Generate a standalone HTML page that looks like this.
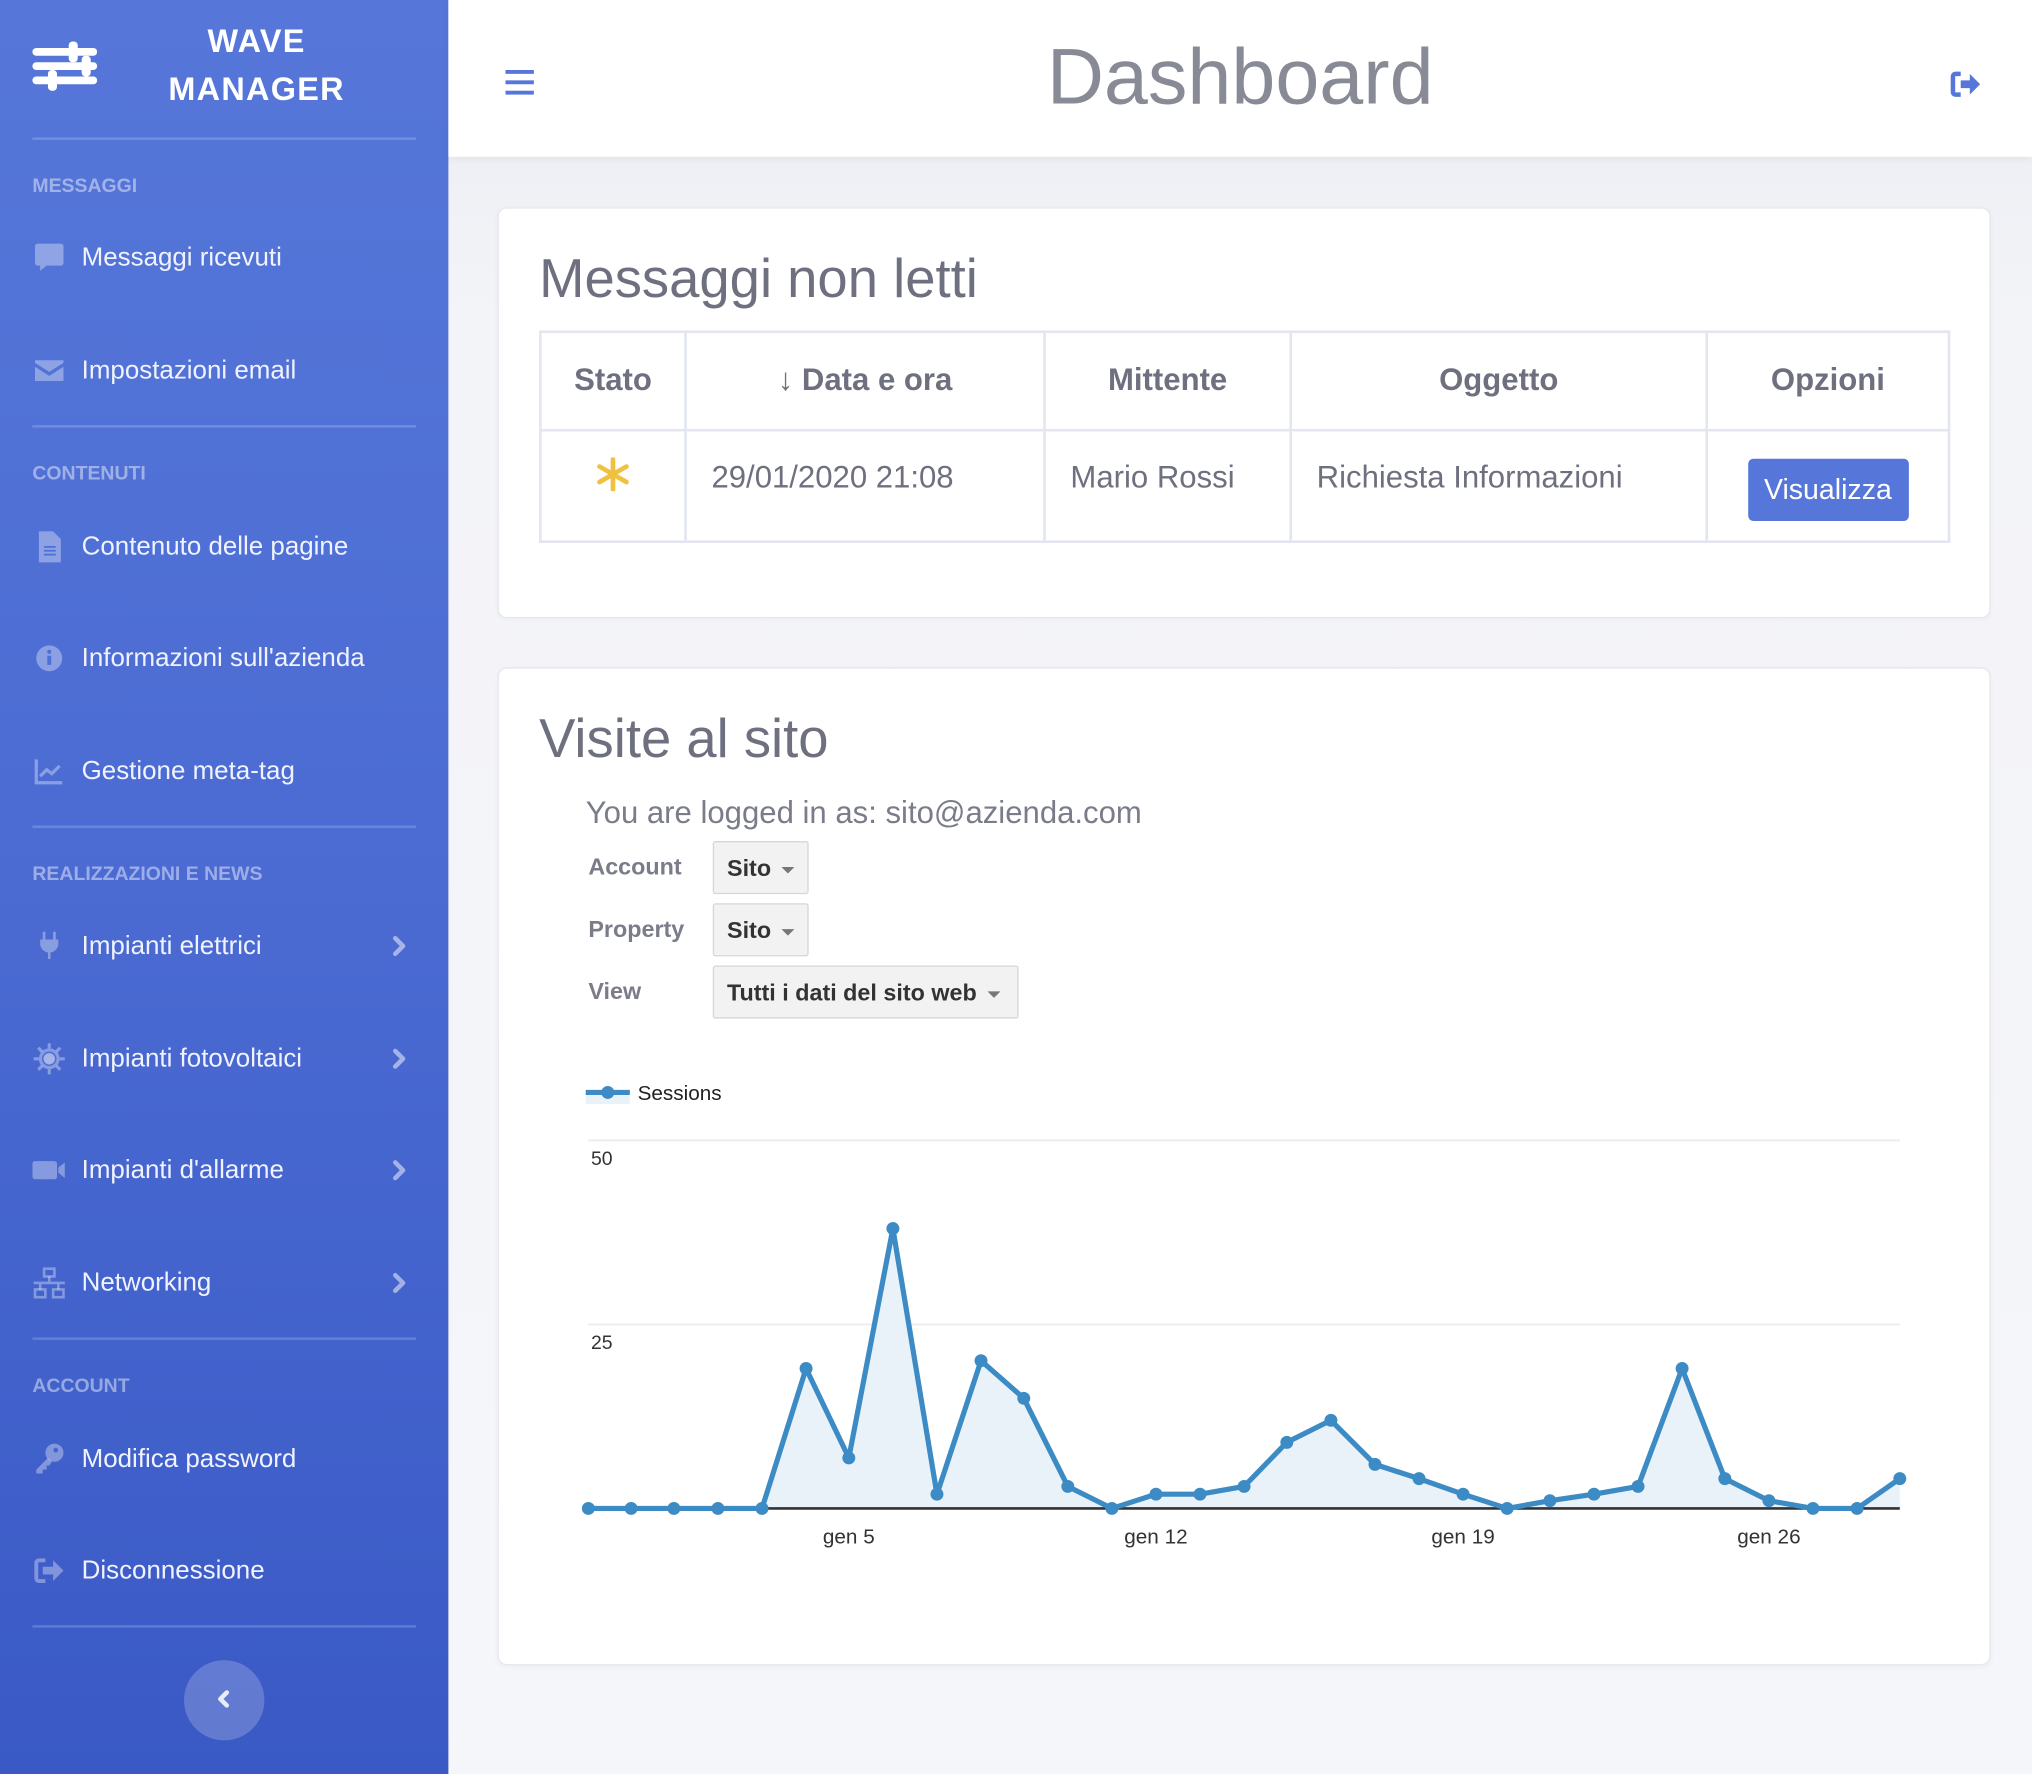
<!DOCTYPE html>
<html><head><meta charset="utf-8">
<style>
html,body{margin:0;padding:0;width:2032px;height:1774px;overflow:hidden;background:#f4f5f9;font-family:"Liberation Sans",sans-serif}
#w{position:absolute;left:0;top:0;width:1568px;height:1369px;transform:scale(1.295918);transform-origin:0 0;background:linear-gradient(180deg,#eaecf1 0,#f3f4f8 250px,#f5f6fa 100%)}
.a{position:absolute;white-space:nowrap}
#sb{position:absolute;left:0;top:0;width:346px;height:1369px;background:linear-gradient(180deg,#5677d9 0%,#4b6bd3 50%,#3a59c5 100%)}
.hr{position:absolute;left:25px;width:296px;height:2px;background:rgba(255,255,255,.18)}
.sec{position:absolute;left:25px;font-size:15px;font-weight:bold;color:rgba(255,255,255,.45);height:20px;line-height:20px}
.it{position:absolute;left:63px;font-size:20px;color:#f0f3ff;height:30px;line-height:30px}
.ic{position:absolute;left:25px;width:26px;height:26px}
.ch{position:absolute;left:300px;width:16px;height:20px}
#hd{position:absolute;left:346px;top:0;width:1222px;height:121px;background:#fff;box-shadow:0 2px 6px rgba(0,0,0,.05)}
.card{position:absolute;left:384px;width:1150px;background:#fff;border:1px solid #e6e8ef;border-radius:7px;box-shadow:0 1px 4px rgba(0,0,0,.04)}
.t{color:#6e7080}
table{border-collapse:collapse;position:absolute;left:416px;top:255px;width:1089px}
td,th{border:2px solid #e3e6ef;text-align:center;font-size:24px;color:#6e7080;padding:0}
th{height:74px;font-weight:bold}
td{height:84px;vertical-align:middle}
td.x{height:72px;padding-bottom:12px;text-align:left;padding-left:19px}
.sel{position:absolute;left:550px;height:41px;background:#f2f2f2;border:1px solid #d6d6d6;border-radius:2px;font-size:18px;font-weight:bold;color:#333;line-height:41px;padding-left:10px;box-sizing:border-box}
.car{display:inline-block;width:0;height:0;border-left:5px solid transparent;border-right:5px solid transparent;border-top:5px solid #777;vertical-align:middle;margin-left:8px}
.lab{position:absolute;left:454px;font-size:18px;font-weight:bold;color:#7a7c8a;height:24px;line-height:24px}
</style></head><body><div id="w">
<div id="sb">
<svg class="a" style="left:25px;top:30px" width="50" height="42" viewBox="0 0 50 42"><g fill="#fff"><rect x="0" y="7" width="50" height="6" rx="3"/><rect x="0" y="18" width="50" height="6" rx="3"/><rect x="0" y="29" width="50" height="6" rx="3"/><rect x="28" y="2" width="7" height="16" rx="3"/><rect x="38" y="13" width="7" height="16" rx="3"/><rect x="12" y="24" width="7" height="16" rx="3"/></g></svg>
<div class="a" style="left:100px;width:196px;top:14px;text-align:center;color:#fff;font-weight:bold;font-size:25px;line-height:37px;letter-spacing:1px">WAVE<br>MANAGER</div>
<div class="hr" style="top:106px"></div>
<div class="sec" style="top:134px">MESSAGGI</div>
<svg class="ic" style="top:186px" viewBox="0 0 26 26"><path d="M4 2h18a2 2 0 0 1 2 2v13a2 2 0 0 1-2 2H11l-5 4v-4H4a2 2 0 0 1-2-2V4a2 2 0 0 1 2-2z" fill="rgba(255,255,255,.35)"/></svg>
<div class="it" style="top:184px">Messaggi ricevuti</div>
<svg class="ic" style="top:273px" viewBox="0 0 26 26"><path d="M2 5h22v2l-11 7-11-7z M2 10l11 7 11-7v11H2z" fill="rgba(255,255,255,.35)"/></svg>
<div class="it" style="top:271px">Impostazioni email</div>
<div class="hr" style="top:328px"></div>
<div class="sec" style="top:356px">CONTENUTI</div>
<svg class="ic" style="top:409px" viewBox="0 0 26 26"><path d="M5 1h11l6 6v18H5z" fill="rgba(255,255,255,.35)"/><path d="M9 13h9M9 16h9M9 19h9" stroke="#4d6fd6" stroke-width="1.3"/></svg>
<div class="it" style="top:407px">Contenuto delle pagine</div>
<svg class="ic" style="top:495px" viewBox="0 0 26 26"><circle cx="13" cy="13" r="10" fill="rgba(255,255,255,.35)"/><rect x="11.5" y="11" width="3" height="7" fill="#4d6fd6"/><circle cx="13" cy="8" r="1.6" fill="#4d6fd6"/></svg>
<div class="it" style="top:493px">Informazioni sull'azienda</div>
<svg class="ic" style="top:582px" viewBox="0 0 26 26"><path d="M3 4v18h20" stroke="rgba(255,255,255,.35)" stroke-width="2.5" fill="none"/><path d="M6 17l5-5 4 3 6-6" stroke="rgba(255,255,255,.35)" stroke-width="2.5" fill="none"/></svg>
<div class="it" style="top:580px">Gestione meta-tag</div>
<div class="hr" style="top:637px"></div>
<div class="sec" style="top:665px">REALIZZAZIONI E NEWS</div>
<svg class="ic" style="top:717px" viewBox="0 0 26 26"><path d="M9 2v6M17 2v6" stroke="rgba(255,255,255,.35)" stroke-width="2"/><path d="M6 8h14v4a7 7 0 0 1-6 6v5h-2v-5a7 7 0 0 1-6-6z" fill="rgba(255,255,255,.35)"/></svg>
<div class="it" style="top:715px">Impianti elettrici</div>
<svg class="ic" style="top:804px" viewBox="0 0 26 26"><circle cx="13" cy="13" r="8" fill="rgba(255,255,255,.35)"/><circle cx="13" cy="13" r="5" fill="rgba(255,255,255,.25)" stroke="#4d6fd6" stroke-width="1.2"/><path d="M13 1v4M13 21v4M1 13h4M21 13h4M4.5 4.5l3 3M18.5 18.5l3 3M4.5 21.5l3-3M18.5 7.5l3-3" stroke="rgba(255,255,255,.35)" stroke-width="2.4"/></svg>
<div class="it" style="top:802px">Impianti fotovoltaici</div>
<svg class="ic" style="top:890px" viewBox="0 0 26 26"><rect x="0" y="6" width="19" height="14" rx="2" fill="rgba(255,255,255,.35)"/><path d="M20 11l5-4v12l-5-4z" fill="rgba(255,255,255,.35)"/></svg>
<div class="it" style="top:888px">Impianti d'allarme</div>
<svg class="ic" style="top:977px" viewBox="0 0 26 26"><g fill="none" stroke="rgba(255,255,255,.35)" stroke-width="2"><rect x="9" y="2" width="8" height="6"/><rect x="2" y="18" width="8" height="6"/><rect x="16" y="18" width="8" height="6"/><path d="M13 8v5M1 13h24M6 13v5M20 13v5"/></g></svg>
<div class="it" style="top:975px">Networking</div>
<svg class="ch" style="top:720px" viewBox="0 0 16 20"><path d="M5 4l6 6-6 6" stroke="rgba(255,255,255,.5)" stroke-width="3.5" fill="none" stroke-linecap="round" stroke-linejoin="round"/></svg>
<svg class="ch" style="top:807px" viewBox="0 0 16 20"><path d="M5 4l6 6-6 6" stroke="rgba(255,255,255,.5)" stroke-width="3.5" fill="none" stroke-linecap="round" stroke-linejoin="round"/></svg>
<svg class="ch" style="top:893px" viewBox="0 0 16 20"><path d="M5 4l6 6-6 6" stroke="rgba(255,255,255,.5)" stroke-width="3.5" fill="none" stroke-linecap="round" stroke-linejoin="round"/></svg>
<svg class="ch" style="top:980px" viewBox="0 0 16 20"><path d="M5 4l6 6-6 6" stroke="rgba(255,255,255,.5)" stroke-width="3.5" fill="none" stroke-linecap="round" stroke-linejoin="round"/></svg>
<div class="hr" style="top:1032px"></div>
<div class="sec" style="top:1060px">ACCOUNT</div>
<svg class="ic" style="top:1112px" viewBox="0 0 26 26"><circle cx="17" cy="9" r="7" fill="rgba(255,255,255,.35)"/><path d="M12 13L3 22v3h5v-3h3v-3h2l2-3z" fill="rgba(255,255,255,.35)"/><circle cx="18" cy="7" r="1.8" fill="#4463cc"/></svg>
<div class="it" style="top:1111px">Modifica password</div>
<svg class="ic" style="top:1199px" viewBox="0 0 26 26"><path d="M10 5H5a2 2 0 0 0-2 2v12a2 2 0 0 0 2 2h5" stroke="rgba(255,255,255,.35)" stroke-width="3" fill="none"/><path d="M8 10h8V5l8 8-8 8v-5H8z" fill="rgba(255,255,255,.35)"/></svg>
<div class="it" style="top:1197px">Disconnessione</div>
<div class="hr" style="top:1254px"></div>
<div class="a" style="left:142px;top:1281px;width:62px;height:62px;border-radius:50%;background:rgba(255,255,255,.2)"></div>
<svg class="a" style="left:164px;top:1301px" width="16" height="20" viewBox="0 0 16 20"><path d="M11 5l-5 5 5 5" stroke="rgba(255,255,255,.85)" stroke-width="3.5" fill="none" stroke-linecap="round" stroke-linejoin="round"/></svg>
</div>
<div id="hd">
<svg class="a" style="left:44px;top:54px" width="22" height="20" viewBox="0 0 22 20"><g fill="#5677d9"><rect y="0" width="22" height="3"/><rect y="8" width="22" height="3"/><rect y="16" width="22" height="3"/></g></svg>
<div class="a" style="left:0;width:1222px;top:22px;text-align:center;font-size:61px;line-height:74px;color:#888a96">Dashboard</div>
<svg class="a" style="left:1158px;top:54px" width="26" height="22" viewBox="0 0 26 22"><path d="M9 3H5a2 2 0 0 0-2 2v12a2 2 0 0 0 2 2h4" stroke="#5677d9" stroke-width="3.5" fill="none"/><path d="M9 8h7V3l8 8-8 8v-5H9z" fill="#5677d9"/></svg>
</div>
<div class="card" style="top:160px;height:315px"></div>
<div class="a t" style="left:416px;top:188px;font-size:42px;line-height:54px">Messaggi non letti</div>
<table>
<tr><th style="width:110px">Stato</th><th style="width:275px">&#8595; Data e ora</th><th style="width:188px">Mittente</th><th style="width:319px">Oggetto</th><th>Opzioni</th></tr>
<tr><td class="x" style="padding-left:0;text-align:center"><svg width="26" height="26" viewBox="0 0 26 26"><path d="M13 1v24M2.6 7l20.8 12M2.6 19L23.4 7" stroke="#f0c040" stroke-width="3.6" stroke-linecap="round"/></svg></td><td class="x">29/01/2020 21:08</td><td class="x">Mario Rossi</td><td class="x">Richiesta Informazioni</td><td><div style="display:inline-block;background:#5677d9;color:#fff;border-radius:4px;width:124px;height:48px;line-height:48px;font-size:22px;margin-top:6px">Visualizza</div></td></tr>
</table>
<div class="card" style="top:515px;height:768px"></div>
<div class="a t" style="left:416px;top:543px;font-size:42px;line-height:54px">Visite al sito</div>
<div class="a" style="left:452px;top:613px;font-size:24px;line-height:30px;color:#7a7c8a">You are logged in as: sito@azienda.com</div>
<div class="lab" style="top:657px">Account</div>
<div class="lab" style="top:705px">Property</div>
<div class="lab" style="top:753px">View</div>
<div class="sel" style="top:649px;width:74px">Sito<span class="car"></span></div>
<div class="sel" style="top:697px;width:74px">Sito<span class="car"></span></div>
<div class="sel" style="top:745px;width:236px">Tutti i dati del sito web<span class="car"></span></div>
<svg class="a" style="left:0;top:0" width="1568" height="1369">
<rect x="452" y="843" width="34" height="9" fill="#eaf2f9"/>
<line x1="452" y1="843" x2="486" y2="843" stroke="#3d8bc4" stroke-width="4"/>
<circle cx="469" cy="843" r="5" fill="#3d8bc4"/>
<text x="492" y="849" font-family="Liberation Sans,sans-serif" font-size="16" fill="#222">Sessions</text>
<line x1="454" y1="880" x2="1466" y2="880" stroke="#ececec" stroke-width="1.5"/>
<line x1="454" y1="1022" x2="1466" y2="1022" stroke="#ececec" stroke-width="1.5"/>
<text x="456" y="899" font-family="Liberation Sans,sans-serif" font-size="15" fill="#333">50</text>
<text x="456" y="1041" font-family="Liberation Sans,sans-serif" font-size="15" fill="#333">25</text>
<polygon fill="#eaf2f9" points="454,1164 487,1164 520,1164 554,1164 588,1164 622,1056 655,1125 689,948 723,1153 757,1050 790,1079 824,1147 858,1164 892,1153 926,1153 960,1147 993,1113 1027,1096 1061,1130 1095,1141 1129,1153 1163,1164 1196,1158 1230,1153 1264,1147 1298,1056 1331,1141 1365,1158 1399,1164 1433,1164 1466,1141 1466,1164"/>
<line x1="454" y1="1164" x2="1466" y2="1164" stroke="#333" stroke-width="2"/>
<polyline fill="none" stroke="#3d8bc4" stroke-width="4" stroke-linejoin="round" points="454,1164 487,1164 520,1164 554,1164 588,1164 622,1056 655,1125 689,948 723,1153 757,1050 790,1079 824,1147 858,1164 892,1153 926,1153 960,1147 993,1113 1027,1096 1061,1130 1095,1141 1129,1153 1163,1164 1196,1158 1230,1153 1264,1147 1298,1056 1331,1141 1365,1158 1399,1164 1433,1164 1466,1141"/>
<g fill="#3d8bc4">
<circle cx="454" cy="1164" r="5"/><circle cx="487" cy="1164" r="5"/><circle cx="520" cy="1164" r="5"/><circle cx="554" cy="1164" r="5"/><circle cx="588" cy="1164" r="5"/><circle cx="622" cy="1056" r="5"/><circle cx="655" cy="1125" r="5"/><circle cx="689" cy="948" r="5"/><circle cx="723" cy="1153" r="5"/><circle cx="757" cy="1050" r="5"/><circle cx="790" cy="1079" r="5"/><circle cx="824" cy="1147" r="5"/><circle cx="858" cy="1164" r="5"/><circle cx="892" cy="1153" r="5"/><circle cx="926" cy="1153" r="5"/><circle cx="960" cy="1147" r="5"/><circle cx="993" cy="1113" r="5"/><circle cx="1027" cy="1096" r="5"/><circle cx="1061" cy="1130" r="5"/><circle cx="1095" cy="1141" r="5"/><circle cx="1129" cy="1153" r="5"/><circle cx="1163" cy="1164" r="5"/><circle cx="1196" cy="1158" r="5"/><circle cx="1230" cy="1153" r="5"/><circle cx="1264" cy="1147" r="5"/><circle cx="1298" cy="1056" r="5"/><circle cx="1331" cy="1141" r="5"/><circle cx="1365" cy="1158" r="5"/><circle cx="1399" cy="1164" r="5"/><circle cx="1433" cy="1164" r="5"/><circle cx="1466" cy="1141" r="5"/>
</g>
<g font-family="Liberation Sans,sans-serif" font-size="16" fill="#333" text-anchor="middle">
<text x="655" y="1191">gen 5</text><text x="892" y="1191">gen 12</text><text x="1129" y="1191">gen 19</text><text x="1365" y="1191">gen 26</text>
</g>
</svg>
</div></body></html>
